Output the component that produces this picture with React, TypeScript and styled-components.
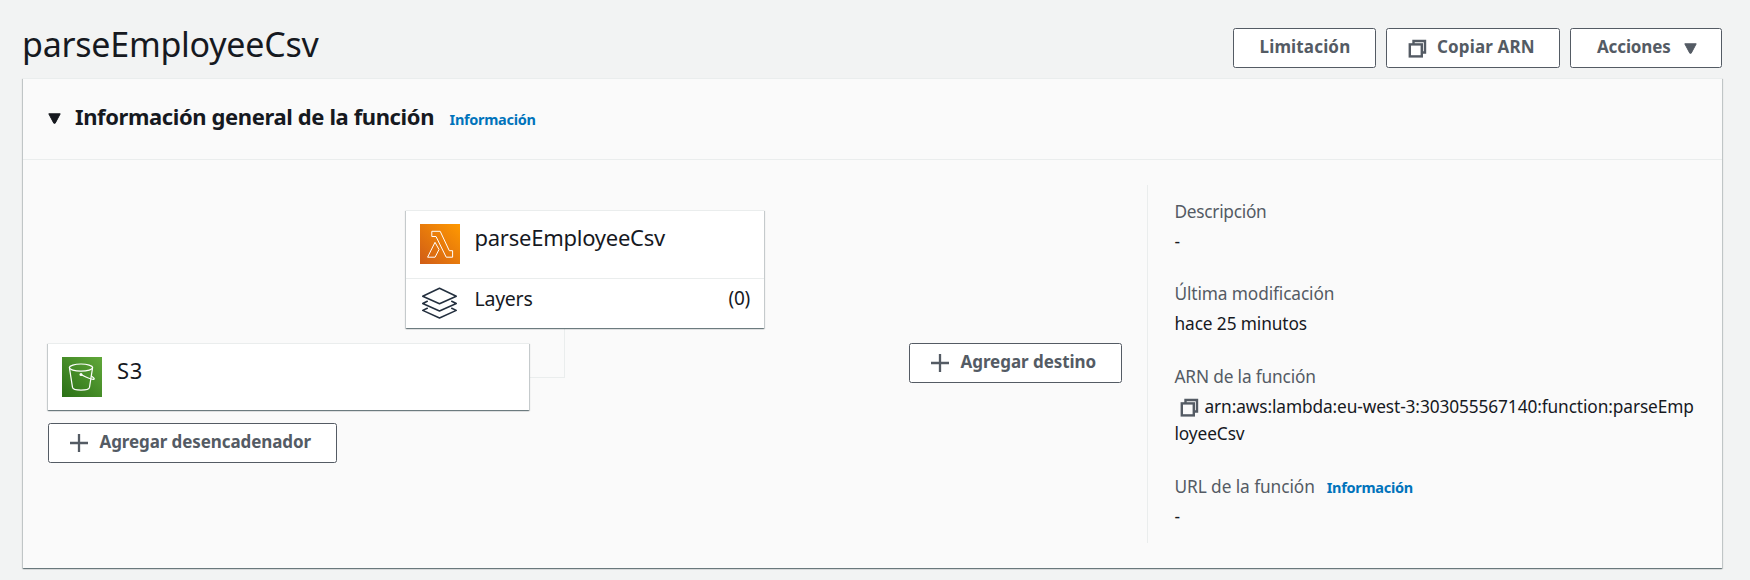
import React from "react";
import styled, { createGlobalStyle } from "styled-components";

const GlobalStyle = createGlobalStyle`
  *, *::before, *::after { box-sizing: border-box; }
  body {
    margin: 0;
    background: #f2f3f3;
    color: #16191f;
    font-family: "Noto Sans", "Open Sans", sans-serif;
  }
`;

const raised = `
  border-top: 1px solid #eaeded;
  box-shadow:
    0 1px 1px 0 rgba(0, 28, 36, 0.4),
    1px 1px 1px 0 rgba(0, 28, 36, 0.15),
    -1px 1px 1px 0 rgba(0, 28, 36, 0.15);
`;

const Page = styled.main`
  width: 1750px;
  height: 580px;
  overflow: hidden;
  padding: 0 28px 0 23px;
`;

const PageHeader = styled.header`
  display: flex;
  justify-content: space-between;
  height: 78px;
`;

const Title = styled.h1`
  margin: 19px 0 0 -1px;
  font-size: 34px;
  line-height: 50px;
  font-weight: 400;
  letter-spacing: -0.25px;
`;

const Actions = styled.div`
  display: flex;
  gap: 10px;
  margin-top: 28px;
`;

const Button = styled.button<{ $width: number; $tracking: number; $shift: number }>`
  display: flex;
  align-items: center;
  flex: none;
  width: ${(p) => p.$width}px;
  height: 40px;
  padding: 0 0 3px ${(p) => p.$shift}px;
  border: 1px solid #545b64;
  border-radius: 2.5px;
  background: #fff;
  color: #545b64;
  font: 700 17px/25px "Noto Sans", "Open Sans", sans-serif;
  letter-spacing: ${(p) => p.$tracking}px;
  white-space: nowrap;

  svg {
    position: relative;
    top: 1.5px;
    flex: none;
  }
`;

const Panel = styled.section`
  height: 490px;
  background: #fafafa;
  ${raised}
`;

const PanelHeader = styled.div`
  display: flex;
  align-items: baseline;
  height: 81px;
  padding: 22px 0 0 24.5px;
  border-bottom: 1px solid #eaeded;

  svg {
    position: relative;
    top: -1.5px;
  }
`;

const Heading = styled.h2`
  margin: 0 15.5px 0 14.5px;
  font-size: 22px;
  line-height: 30px;
  font-weight: 700;
  letter-spacing: -0.39px;
`;

const InfoLink = styled.a`
  color: #0073bb;
  font-size: 14.5px;
  line-height: 20px;
  font-weight: 700;
  letter-spacing: -0.3px;
`;

const PanelBody = styled.div`
  display: flex;
  height: 408px;
  padding: 25px 25px 25px 24.5px;
`;

const Diagram = styled.div`
  position: relative;
  flex: none;
  width: 1099.5px;
  height: 358px;
`;

const Node = styled.div<{ $x: number; $y: number; $w: number; $h: number }>`
  position: absolute;
  left: ${(p) => p.$x}px;
  top: ${(p) => p.$y}px;
  width: ${(p) => p.$w}px;
  height: ${(p) => p.$h}px;
  background: #fff;
  ${raised}
`;

const Placed = styled.div<{ $x: number; $y: number }>`
  position: absolute;
  left: ${(p) => p.$x}px;
  top: ${(p) => p.$y}px;
`;

const Connector = styled.div`
  position: absolute;
  left: 482px;
  top: 144px;
  width: 35.5px;
  height: 49px;
  border-right: 1px solid #eaeded;
  border-bottom: 1px solid #eaeded;
`;

const NodeTop = styled.div`
  display: flex;
  gap: 15px;
  padding: 13px 14px 0;
  height: 67px;
`;

const NodeName = styled.div<{ $tracking: number }>`
  margin-top: -2px;
  font-size: 22px;
  line-height: 30px;
  letter-spacing: ${(p) => p.$tracking}px;
`;

const LayersRow = styled.div`
  display: flex;
  height: 50px;
  padding: 6px 14px 0;
  border-top: 1px solid #eaeded;
  font-size: 19.5px;
  line-height: 27px;
  letter-spacing: -0.25px;

  svg { margin-top: -2px; }
`;

const LayersLabel = styled.span`
  margin-left: 15px;
`;

const LayersCount = styled.span`
  margin-left: auto;
  font-size: 19px;
`;

const Details = styled.dl`
  flex: 1;
  margin: 0;
  padding: 12.6px 0 0 26.5px;
  border-left: 1px solid #eaeded;
  font-size: 17.3px;
  line-height: 27.5px;
`;

const Detail = styled.div`
  margin-bottom: 25px;
`;

const Term = styled.dt<{ $tracking: number }>`
  margin-bottom: 2.5px;
  color: #545b64;
  letter-spacing: ${(p) => p.$tracking}px;

  a { margin-left: 12px; }
`;

const Value = styled.dd`
  margin: 0;
  letter-spacing: -0.11px;
  word-break: break-all;

  svg {
    margin: 0 6px 0 5px;
    vertical-align: -4px;
  }
`;

const CopyIcon = () => (
  <svg width="19" height="19" viewBox="0 0 19 19" fill="none" stroke="#545b64" strokeWidth="2.4">
    <path d="M5.5 5V2H17V13.5H14" />
    <rect x="1.8" y="5.4" width="12" height="12" />
  </svg>
);

const PlusIcon = () => (
  <svg width="18" height="18" viewBox="0 0 18 18" stroke="#545b64" strokeWidth="2.3">
    <path d="M9 0V18M0 9H18" />
  </svg>
);

const Caret = ({ color }: { color: string }) => (
  <svg width="13" height="11" viewBox="0 0 13 11" fill={color} stroke={color} strokeLinejoin="round">
    <path d="M.8 .8H12.2L7.2 10.2H5.8Z" />
  </svg>
);

const LambdaIcon = () => (
  <svg width="40" height="40" viewBox="0 0 40 40">
    <defs>
      <linearGradient id="lambda" x1="0" y1="1" x2="1" y2="0">
        <stop offset="0" stopColor="#d05c17" />
        <stop offset="1" stopColor="#f90" />
      </linearGradient>
    </defs>
    <rect width="40" height="40" fill="url(#lambda)" />
    <g fill="none" stroke="#fff" strokeWidth="1">
      <path d="M11.8 7.3H20.2L29.3 26.7H32.6V33.2H26.2L16 12.5H11.8Z" />
      <path d="M15 18.3L19 25.5L15.1 33.2H7.6Z" />
    </g>
  </svg>
);

const BucketIcon = () => (
  <svg width="40" height="40" viewBox="0 0 40 40">
    <defs>
      <linearGradient id="bucket" x1="0" y1="1" x2="1" y2="0">
        <stop offset="0" stopColor="#2a7016" />
        <stop offset="1" stopColor="#61a83a" />
      </linearGradient>
    </defs>
    <rect width="40" height="40" fill="url(#bucket)" />
    <g fill="none" stroke="#fff" strokeWidth="1.2">
      <ellipse cx="19" cy="10.6" rx="11.6" ry="3.6" />
      <path d="M7.4 10.6L10.5 30.4C11.3 34 26.7 34 27.5 30.4L30.6 10.6" />
      <path d="M19 17.6C24 20.4 28.5 22.3 31.5 22.4C33.3 22.2 31.5 20.2 29.3 18.9" />
    </g>
    <circle cx="19" cy="17.5" r="1.5" fill="#fff" />
  </svg>
);

const LayersIcon = () => (
  <svg width="40" height="40" viewBox="0 0 40 40" fill="none" stroke="#232f3e" strokeWidth="1.5" strokeLinejoin="round" strokeLinecap="round">
    <path d="M19.5 5.2L36.3 13.2L19.5 20.8L2.7 13.2Z" />
    <path d="M7.3 18.3L2.7 20.5L19.5 28L36.3 20.5L31.7 18.3" />
    <path d="M7.3 25.3L2.7 27.4L19.5 35L36.3 27.4L31.7 25.3" />
  </svg>
);

const Gap = styled.span<{ $size: number }>`
  flex: none;
  width: ${(p) => p.$size}px;
`;

export default function App() {
  return (
    <Page>
      <GlobalStyle />
      <PageHeader>
        <Title>parseEmployeeCsv</Title>
        <Actions>
          <Button $width={143} $tracking={0.15} $shift={25.5}>Limitación</Button>
          <Button $width={174} $tracking={0.15} $shift={20.5}><CopyIcon /><Gap $size={10.5} />Copiar ARN</Button>
          <Button $width={152} $tracking={-0.14} $shift={26}>Acciones<Gap $size={13.5} /><Caret color="#545b64" /></Button>
        </Actions>
      </PageHeader>
      <Panel>
        <PanelHeader>
          <Caret color="#16191f" />
          <Heading>Información general de la función</Heading>
          <InfoLink>Información</InfoLink>
        </PanelHeader>
        <PanelBody>
          <Diagram>
            <Connector />
            <Node $x={358} $y={25} $w={358.5} $h={118}>
              <NodeTop><LambdaIcon /><NodeName $tracking={-0.25}>parseEmployeeCsv</NodeName></NodeTop>
              <LayersRow><LayersIcon /><LayersLabel>Layers</LayersLabel><LayersCount>(0)</LayersCount></LayersRow>
            </Node>
            <Node $x={0.5} $y={158} $w={481} $h={67}>
              <NodeTop><BucketIcon /><NodeName $tracking={0.6}>S3</NodeName></NodeTop>
            </Node>
            <Placed $x={0.5} $y={238}>
              <Button $width={289} $tracking={-0.095} $shift={20.5}><PlusIcon /><Gap $size={12} />Agregar desencadenador</Button>
            </Placed>
            <Placed $x={861.5} $y={158}>
              <Button $width={213} $tracking={-0.05} $shift={20.5}><PlusIcon /><Gap $size={12} />Agregar destino</Button>
            </Placed>
          </Diagram>
          <Details>
            <Detail><Term $tracking={-0.28}>Descripción</Term><Value>-</Value></Detail>
            <Detail><Term $tracking={-0.12}>Última modificación</Term><Value>hace 25 minutos</Value></Detail>
            <Detail>
              <Term $tracking={-0.17}>ARN de la función</Term>
              <Value><CopyIcon />arn:aws:lambda:eu-west-3:303055567140:function:parseEmployeeCsv</Value>
            </Detail>
            <Detail><Term $tracking={-0.08}>URL de la función<InfoLink>Información</InfoLink></Term><Value>-</Value></Detail>
          </Details>
        </PanelBody>
      </Panel>
    </Page>
  );
}
